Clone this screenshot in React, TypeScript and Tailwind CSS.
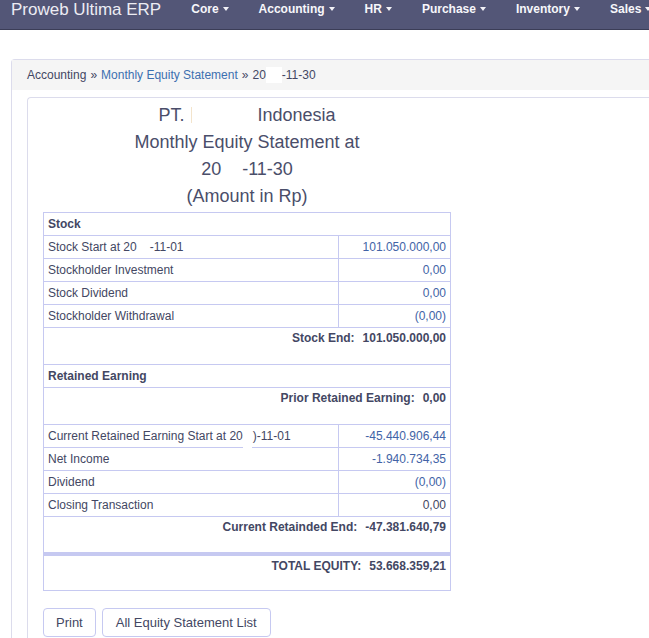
const font = { fontFamily: '"Liberation Sans", Arial, sans-serif' }

function Caret() {
  return (
    <span className="ml-[4px] inline-block h-0 w-0 border-x-[3.5px] border-t-[4px] border-x-transparent border-t-[#f2f2f7] align-middle" />
  )
}

const navItems = ["Core", "Accounting", "HR", "Purchase", "Inventory", "Sales"]

type Row = { label: React.ReactNode; value: string; link?: boolean }

const stockRows: Row[] = [
  {
    label: (
      <>
        Stock Start at 20<span className="inline-block w-[13px]" />-11-01
      </>
    ),
    value: "101.050.000,00",
    link: true,
  },
  { label: "Stockholder Investment", value: "0,00", link: true },
  { label: "Stock Dividend", value: "0,00", link: true },
  { label: "Stockholder Withdrawal", value: "(0,00)", link: true },
]

const retainedRows: Row[] = [
  { label: "Net Income", value: "-1.940.734,35", link: true },
  { label: "Dividend", value: "(0,00)", link: true },
  { label: "Closing Transaction", value: "0,00" },
]

function ItemRow({ row, patch }: { row: Row; patch?: boolean }) {
  return (
    <tr className="h-[23px]">
      <td className="relative border border-[#c6c9f1] px-[4px]">
        {row.label}
        {patch && <span className="absolute bottom-[-1px] left-[199px] top-[2px] w-[9px] bg-white" />}
      </td>
      <td className={`border border-[#c6c9f1] px-[4px] text-right ${row.link ? "text-[#4263a6]" : ""}`}>
        {row.value}
      </td>
    </tr>
  )
}

function TotalRow({ label, value, thick }: { label: string; value: string; thick?: boolean }) {
  return (
    <tr className="h-[37px]">
      <td
        colSpan={2}
        className={`border border-[#c6c9f1] px-[4px] pt-[1px] align-top text-right font-bold ${thick ? "border-b-[4px]" : ""}`}
      >
        {label}
        <span className="ml-[8px]">{value}</span>
      </td>
    </tr>
  )
}

function HeadRow({ label }: { label: string }) {
  return (
    <tr className="h-[23px]">
      <td colSpan={2} className="border border-[#c6c9f1] px-[4px] font-bold">
        {label}
      </td>
    </tr>
  )
}

export default function App() {
  return (
    <div className="min-h-[638px] overflow-hidden bg-white text-[12px] text-[#434763]" style={font}>
      <nav className="flex h-[30px] items-start border-b border-[#3b3d57] bg-[#535677] whitespace-nowrap">
        <span className="pl-[11px] pr-[15px] text-[17px] leading-[19px] text-[#ececf3]">Proweb Ultima ERP</span>
        {navItems.map((n) => (
          <span key={n} className="mt-[2px] flex items-center px-[15px] text-[12px] leading-[14px] font-bold text-[#f7f7fb]">
            {n}
            <Caret />
          </span>
        ))}
      </nav>

      <div className="ml-[11px] mt-[29px] rounded-tl-[4px] border-l border-t border-[#dcdcec]">
        <div className="flex h-[30px] items-center bg-[#f5f5f5] pl-[15px] whitespace-nowrap">
          <span>Accounting</span>
          <span className="mx-[4px]">»</span>
          <span className="text-[#3c70b0]">Monthly Equity Statement</span>
          <span className="mx-[4px]">»</span>
          <span>20</span>
          <span className="inline-block h-[16px] w-[16px] bg-white" />
          <span>-11-30</span>
        </div>

        <div className="pl-[15px] pt-[7px]">
          <div className="rounded-tl-[4px] border-l border-t border-[#dcdcec] pl-[15px] pt-[4px] pb-[2px]">
            <div className="w-[408px] text-center text-[18px] leading-[27px] text-[#4a4e6a]">
              <div>
                PT.
                <span className="inline-block h-[18px] w-[73px] align-middle">
                  <span className="ml-[7px] block h-[16px] w-[1px] bg-[#f3e4cc]" />
                </span>
                Indonesia
              </div>
              <div>Monthly Equity Statement at</div>
              <div>
                20<span className="inline-block w-[21px]" />-11-30
              </div>
              <div>(Amount in Rp)</div>
            </div>

            <table className="mt-[2px] w-[408px] border-collapse">
              <colgroup>
                <col className="w-[296px]" />
                <col className="w-[112px]" />
              </colgroup>
              <tbody>
                <HeadRow label="Stock" />
                {stockRows.map((r, i) => (
                  <ItemRow key={i} row={r} />
                ))}
                <TotalRow label="Stock End:" value="101.050.000,00" />
                <HeadRow label="Retained Earning" />
                <TotalRow label="Prior Retained Earning:" value="0,00" />
                <ItemRow
                  patch
                  row={{
                    label: (
                      <>
                        Current Retained Earning Start at 20<span className="inline-block w-[10px]" />)-11-01
                      </>
                    ),
                    value: "-45.440.906,44",
                    link: true,
                  }}
                />
                {retainedRows.map((r, i) => (
                  <ItemRow key={i} row={r} />
                ))}
                <TotalRow label="Current Retainded End:" value="-47.381.640,79" thick />
                <TotalRow label="TOTAL EQUITY:" value="53.668.359,21" />
              </tbody>
            </table>

            <div className="mt-[17px] flex gap-[6px]">
              <button className="h-[29px] rounded-[4px] border border-[#c6c9f1] bg-white px-[12px] text-[13px]">
                Print
              </button>
              <button className="h-[29px] rounded-[4px] border border-[#c6c9f1] bg-white px-[13px] text-[13px]">
                All Equity Statement List
              </button>
            </div>
          </div>
        </div>
      </div>
    </div>
  )
}
